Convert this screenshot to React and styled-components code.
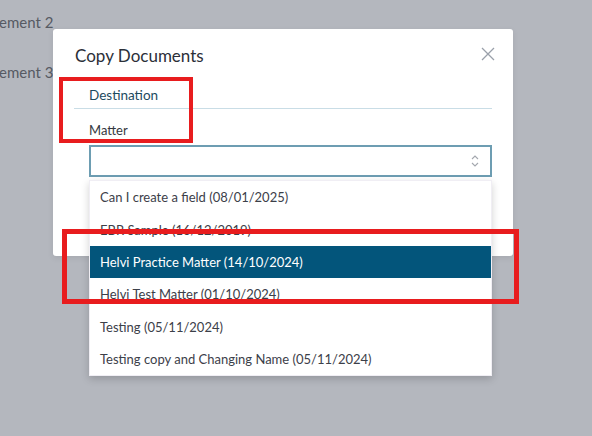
import React from 'react';
import styled, { createGlobalStyle } from 'styled-components';

const GlobalStyle = createGlobalStyle`
       html, body {
              margin: 0;
              padding: 0;
              background: #b4b7be;
              font-family: Lato, "Open Sans", sans-serif;
       }
`;

const matters = [
       'Can I create a field (08/01/2025)',
       'EBR Sample (16/12/2019)',
       'Helvi Practice Matter (14/10/2024)',
       'Helvi Test Matter (01/10/2024)',
       'Testing (05/11/2024)',
       'Testing copy and Changing Name (05/11/2024)',
];

const App = () => {
       return (
<>
<GlobalStyle />
<Page>
       <BackList>
              <BackRow>ement 2</BackRow>
              <BackRow>ement 3</BackRow>
       </BackList>

       <Modal>
              <Header>
                     <Title>Copy Documents</Title>
                     <CloseButton aria-label="close">
                            <svg width="14" height="14" viewBox="0 0 14 14">
                                   <path d="M1 1 L13 13 M13 1 L1 13" stroke="#9aa0aa" strokeWidth="1.3" fill="none" />
                            </svg>
                     </CloseButton>
              </Header>
              <Tabs>
                     <Tab>Destination</Tab>
              </Tabs>
              <Field>
                     <Label>Matter</Label>
                     <SelectWrap>
                            <SelectBox>
                                   <svg width="10" height="14" viewBox="0 0 10 14">
                                          <path d="M2 5 L5 2 L8 5 M2 9 L5 12 L8 9" stroke="#a3a7ae" strokeWidth="1.1" fill="none" />
                                   </svg>
                            </SelectBox>
                            <Menu>
                                   {matters.map((m, i) => (
                                          <Option key={m} $active={i === 2}>{m}</Option>
                                   ))}
                            </Menu>
                     </SelectWrap>
              </Field>
       </Modal>

       <Highlight $left={59} $top={77} $width={134} $height={66} $thick={4} />
       <Highlight $left={62} $top={229} $width={457} $height={75} $thick={5} />
</Page>
</>
       );
};

const Page = styled.div`
       position: relative;
       width: 592px;
       height: 436px;
       overflow: hidden;
       background: #b4b7be;
`;

const BackList = styled.div`
       display: flex;
       flex-direction: column;
       padding-top: 10px;
`;

const BackRow = styled.div`
       height: 50px;
       font-size: 15px;
       line-height: 24px;
       color: #565a63;
       margin-left: -1px;
`;

const Modal = styled.div`
       position: absolute;
       left: 53px;
       top: 29px;
       width: 460px;
       height: 227px;
       box-sizing: border-box;
       padding: 15px 21px 0 21px;
       background: #fff;
       border-radius: 3px;
       box-shadow: 0 2px 6px rgba(0, 0, 0, 0.08);
`;

const Header = styled.div`
       display: flex;
       justify-content: space-between;
       align-items: flex-start;
       height: 24px;
`;

const Title = styled.h2`
       margin: 0 0 0 1px;
       font-size: 17px;
       line-height: 24px;
       font-weight: 400;
       color: #2b2f38;
`;

const CloseButton = styled.button`
       border: none;
       background: none;
       padding: 0;
       margin: 3px -3px 0 0;
       width: 14px;
       height: 14px;
       display: flex;
       cursor: pointer;
`;

const Tabs = styled.div`
       display: flex;
       margin-top: 17px;
       border-bottom: 1px solid #c9dde6;
`;

const Tab = styled.div`
       padding: 0 15px 3px 15px;
       font-size: 13.5px;
       line-height: 20px;
       color: #1d4a5e;
`;

const Field = styled.div`
       display: flex;
       flex-direction: column;
       padding: 11px 0 0 15px;
`;

const Label = styled.label`
       font-size: 13px;
       line-height: 20px;
       color: #353840;
       margin-bottom: 5px;
`;

const SelectWrap = styled.div`
       position: relative;
`;

const SelectBox = styled.div`
       height: 32px;
       box-sizing: border-box;
       border: 2px solid #6d9db2;
       display: flex;
       align-items: center;
       justify-content: flex-end;
       padding-right: 10px;
`;

const Menu = styled.ul`
       position: absolute;
       top: 35px;
       left: 0;
       right: 0;
       margin: 0;
       padding: 0;
       list-style: none;
       background: #fff;
       border: 1px solid #f0eef4;
       box-shadow: 0 3px 8px rgba(0, 0, 0, 0.18);
       z-index: 2;
`;

const Option = styled.li`
       height: 32.4px;
       display: flex;
       align-items: center;
       padding-left: 10px;
       font-size: 13px;
       color: ${p => (p.$active ? '#ffffff' : '#3c4049')};
       background: ${p => (p.$active ? '#03557b' : 'transparent')};
`;

const Highlight = styled.div`
       position: absolute;
       left: ${p => p.$left}px;
       top: ${p => p.$top}px;
       width: ${p => p.$width}px;
       height: ${p => p.$height}px;
       box-sizing: border-box;
       border: ${p => p.$thick}px solid #e81c1e;
       z-index: 5;
       pointer-events: none;
`;

export default App;
